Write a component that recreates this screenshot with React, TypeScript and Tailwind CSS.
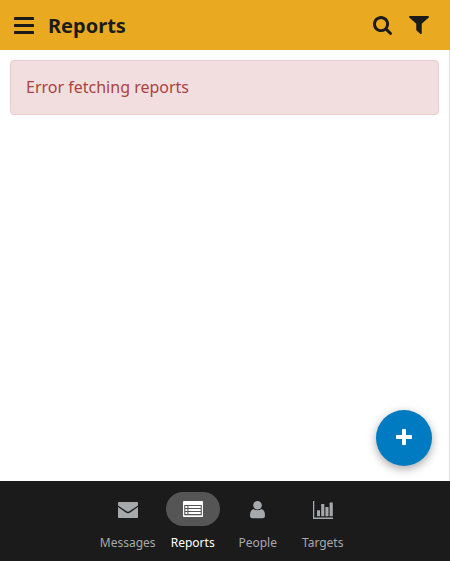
import type { ReactNode } from "react";

function Hamburger() {
  return (
    <svg className="mt-px" width="20" height="18" viewBox="0 0 20 18" fill="currentColor">
      <rect width="20" height="3.1" rx=".7" />
      <rect y="7" width="20" height="3.1" rx=".7" />
      <rect y="14" width="20" height="3.1" rx=".7" />
    </svg>
  );
}

function SearchIcon() {
  return (
    <svg width="19" height="19" viewBox="0 128 1664 1664" fill="currentColor">
      <path d="M1152 832q0-185-131.5-316.5T704 384 387.5 515.5 256 832t131.5 316.5T704 1280t316.5-131.5T1152 832zm512 832q0 52-38 90t-90 38q-54 0-90-38l-343-342q-179 124-399 124-143 0-273.5-55.5t-225-150-150-225T0 832t55.5-273.5 150-225 225-150T704 128t273.5 55.5 225 150 150 225T1408 832q0 220-124 399l343 343q37 37 37 90z" />
    </svg>
  );
}

function FilterIcon() {
  return (
    <svg width="20" height="18" viewBox="0 256 1408 1408" preserveAspectRatio="none" fill="currentColor">
      <path d="M1403 295q17 41-14 70L896 858v742q0 42-39 59-13 5-25 5-27 0-45-19l-256-256q-19-19-19-45V858L19 365q-31-29-14-70 17-39 59-39h1280q42 0 59 39z" />
    </svg>
  );
}

function EnvelopeIcon() {
  return (
    <svg className="mt-0.5" width="20" height="16" viewBox="0 0 20 16" fill="currentColor">
      <path d="M.8 0H19.2Q20 0 20 .8V3.4L11.8 9.1Q10 10.3 8.2 9.1L0 3.4V.8Q0 0 .8 0Z" />
      <path d="M0 4.9 7.8 10.5Q10 11.9 12.2 10.5L20 4.9V15.2Q20 16 19.2 16H.8Q0 16 0 15.2Z" />
    </svg>
  );
}

function ListIcon() {
  return (
    <svg width="20" height="16" viewBox="0 0 20 16">
      <rect width="20" height="16" rx=".7" fill="white" />
      <path fill="#555" d="M1.2 4H18.8V14.3H1.2Z" />
      <path fill="white" d="M2.3 5H4.4V7H2.3ZM5.4 5H17.7V7H5.4ZM2.3 8H4.4V10H2.3ZM5.4 8H17.7V10H5.4ZM2.3 11H4.4V13H2.3ZM5.4 11H17.7V13H5.4Z" />
    </svg>
  );
}

function PersonIcon() {
  return (
    <svg className="mt-0.5" width="15" height="18" viewBox="0 0 15 18" fill="currentColor">
      <circle cx="7.5" cy="4.3" r="4.3" />
      <path d="M3.3 8.1Q7.5 10.5 11.7 8.1Q15 9.4 15 14.5Q15 17.3 12.6 17.3H2.4Q0 17.3 0 14.5Q0 9.4 3.3 8.1Z" />
    </svg>
  );
}

function ChartIcon() {
  return (
    <svg className="mt-0.5" width="20" height="18" viewBox="0 0 20 18" fill="currentColor">
      <path d="M0 0H1.3V16.6H20V18H0Z" />
      <path d="M4 9.2H7V15.2H4ZM8.2 3H11.3V15.2H8.2ZM12.4 6.1H15.5V15.2H12.4ZM16.6 1.5H19.8V15.2H16.6Z" />
    </svg>
  );
}

function Tab({ icon, label, active = false }: { icon: ReactNode; label: string; active?: boolean }) {
  return (
    <a className={`flex w-[65px] flex-col items-center ${active ? "text-white" : "text-[#a7a8ac]"}`}>
      <span className={`flex h-[34px] w-[54px] items-center justify-center rounded-full ${active ? "bg-[#555555]" : ""}`}>
        {icon}
      </span>
      <span className="mt-2 pl-[0.4px] text-xs leading-[18px]">{label}</span>
    </a>
  );
}

export default function App() {
  return (
    <div className="relative flex h-[561px] w-[450px] flex-col overflow-hidden bg-white font-['Noto_Sans',sans-serif]">
      <header className="flex h-[50px] shrink-0 items-center bg-[#e9aa22] pt-px pr-[21px] pl-3.5 text-[#1b1b1a]">
        <Hamburger />
        <h1 className="ml-3.5 flex-1 pt-px text-xl leading-[30px] font-bold">Reports</h1>
        <div className="flex items-center gap-[17px] pb-px">
          <SearchIcon />
          <FilterIcon />
        </div>
      </header>
      <main className="flex-1 border-r border-[#e0e0e0] p-2.5">
        <div className="flex h-[55px] items-center rounded border border-[#ebccd1] bg-[#f2dede] px-[15px] pb-0.5 text-base text-[#a94442]">
          Error fetching reports
        </div>
      </main>
      <button aria-label="Add report" className="absolute right-[18px] bottom-[95px] flex size-14 items-center justify-center rounded-full bg-[#007ac0] pb-0.5 text-white shadow-[0_3px_10px_rgba(0,0,0,0.35)]">
        <svg width="16" height="16" viewBox="0 0 16 16" fill="currentColor">
          <path d="M6.7 0H9.3Q10 0 10 .7V6H15.3Q16 6 16 6.7V9.3Q16 10 15.3 10H10V15.3Q10 16 9.3 16H6.7Q6 16 6 15.3V10H.7Q0 10 0 9.3V6.7Q0 6 .7 6H6V.7Q6 0 6.7 0Z" />
        </svg>
      </button>
      <nav className="relative flex h-20 shrink-0 justify-center bg-[#1b1b1b] pt-[11px]">
        <Tab icon={<EnvelopeIcon />} label="Messages" />
        <Tab icon={<ListIcon />} label="Reports" active />
        <Tab icon={<PersonIcon />} label="People" />
        <Tab icon={<ChartIcon />} label="Targets" />
      </nav>
    </div>
  );
}
